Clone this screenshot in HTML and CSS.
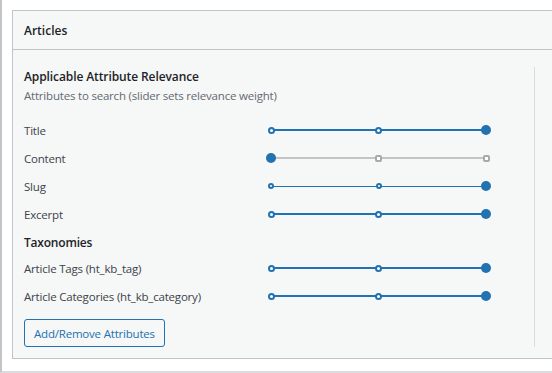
FILE: index.html
```html
<!DOCTYPE html>
<html lang="en">
<head>
    <meta charset="UTF-8">
    <meta name="viewport" content="width=device-width, initial-scale=1.0">
    <title>Articles - Search Attributes</title>
    <link rel="stylesheet" href="styles.css">
</head>
<body>
    <div class="wrap">
        <div class="postbox">
            <!-- Box Header -->
            <div class="postbox-header">
                <h2>Articles</h2>
            </div>

            <!-- Box Body -->
            <div class="postbox-body">
                <div class="panel">
                    <h3>Applicable Attribute Relevance</h3>
                    <p class="desc">Attributes to search (slider sets relevance weight)</p>

                    <div class="attr-list">
                        <div class="attr-row">
                            <span class="label">Title</span>
                            <div class="slider">
                                <span class="stop"><i class="dot"></i></span>
                                <span class="stop"><i class="dot"></i></span>
                                <span class="stop"><i class="dot active"></i></span>
                            </div>
                        </div>
                        <div class="attr-row">
                            <span class="label">Content</span>
                            <div class="slider off">
                                <span class="stop"><i class="dot active"></i></span>
                                <span class="stop"><i class="dot"></i></span>
                                <span class="stop"><i class="dot"></i></span>
                            </div>
                        </div>
                        <div class="attr-row">
                            <span class="label">Slug</span>
                            <div class="slider thin">
                                <span class="stop"><i class="dot"></i></span>
                                <span class="stop"><i class="dot"></i></span>
                                <span class="stop"><i class="dot active"></i></span>
                            </div>
                        </div>
                        <div class="attr-row">
                            <span class="label">Excerpt</span>
                            <div class="slider">
                                <span class="stop"><i class="dot"></i></span>
                                <span class="stop"><i class="dot"></i></span>
                                <span class="stop"><i class="dot active"></i></span>
                            </div>
                        </div>
                    </div>

                    <h4>Taxonomies</h4>

                    <div class="attr-list">
                        <div class="attr-row">
                            <span class="label">Article Tags (ht_kb_tag)</span>
                            <div class="slider">
                                <span class="stop"><i class="dot"></i></span>
                                <span class="stop"><i class="dot"></i></span>
                                <span class="stop"><i class="dot active"></i></span>
                            </div>
                        </div>
                        <div class="attr-row">
                            <span class="label">Article Categories (ht_kb_category)</span>
                            <div class="slider">
                                <span class="stop"><i class="dot"></i></span>
                                <span class="stop"><i class="dot"></i></span>
                                <span class="stop"><i class="dot active"></i></span>
                            </div>
                        </div>
                    </div>

                    <button class="button" type="button">Add/Remove Attributes</button>
                </div>
            </div>
        </div>
    </div>
</body>
</html>
```

FILE: styles.css
```css
/* Reset */
*, *::before, *::after {
    box-sizing: border-box;
}

body {
    margin: 0;
    padding: 0;
    background: #fff;
    font-family: 'Open Sans', 'Noto Sans', sans-serif;
    font-size: 11.5px;
    letter-spacing: -0.2px;
    color: #3c434a;
    overflow: hidden;
}

.wrap {
    height: 373px;
    border-left: 2px solid #c3c4c7;
    border-bottom: 2px solid #dcdcde;
    padding: 10px 0 0 10px;
    overflow: hidden;
}

.postbox {
    width: 580px;
    border: 1px solid #c3c4c7;
    background: #f6f7f7;
}

.postbox-header {
    height: 39px;
    display: flex;
    align-items: center;
    padding: 0 11px;
    border-bottom: 1px solid #c3c4c7;
}

.postbox-header h2 {
    margin: 0;
    font-size: 12px;
    font-weight: 600;
    letter-spacing: 0;
    color: #1d2327;
}

.postbox-body {
    padding: 17px 0 11px 11px;
}

.panel {
    width: 511px;
    border-right: 1px solid #dcdcde;
}

h3 {
    margin: 0;
    font-size: 12px;
    line-height: 20px;
    font-weight: 600;
    letter-spacing: -0.1px;
    color: #1d2327;
}

.desc {
    margin: 0 0 11px;
    line-height: 18px;
    color: #646970;
}

h4 {
    margin: 5px 0 1px;
    font-size: 12px;
    line-height: 20px;
    font-weight: 600;
    color: #1d2327;
}

.attr-row {
    height: 28px;
    display: flex;
    align-items: center;
}

.label {
    width: 242px;
}

/* Three-stop relevance slider */
.slider {
    position: relative;
    width: 225px;
    display: flex;
    justify-content: space-between;
}

.slider::before {
    content: "";
    position: absolute;
    left: 5px;
    right: 5px;
    top: 50%;
    height: 2px;
    margin-top: -1px;
    background: #2271b1;
}

.slider.thin::before {
    height: 1px;
    margin-top: 0;
}

.slider.off::before {
    background: #c3c4c7;
}

.stop {
    position: relative;
    width: 10px;
    height: 10px;
    display: flex;
    align-items: center;
    justify-content: center;
}

.dot {
    width: 7px;
    height: 7px;
    border-radius: 50%;
    border: 2px solid #2271b1;
    background: #fff;
}

.slider.thin .dot {
    width: 6px;
    height: 6px;
}

.slider.off .dot {
    border-color: #a7aaad;
    border-radius: 2px;
}

.slider .dot.active {
    width: 10px;
    height: 10px;
    border: none;
    border-radius: 50%;
    background: #2271b1;
}

.button {
    margin-top: 9px;
    height: 28px;
    padding: 0 9px;
    font-family: inherit;
    font-size: 11.5px;
    letter-spacing: -0.2px;
    color: #2271b1;
    background: #f6f7f7;
    border: 1px solid #2271b1;
    border-radius: 3px;
    cursor: pointer;
}
```
